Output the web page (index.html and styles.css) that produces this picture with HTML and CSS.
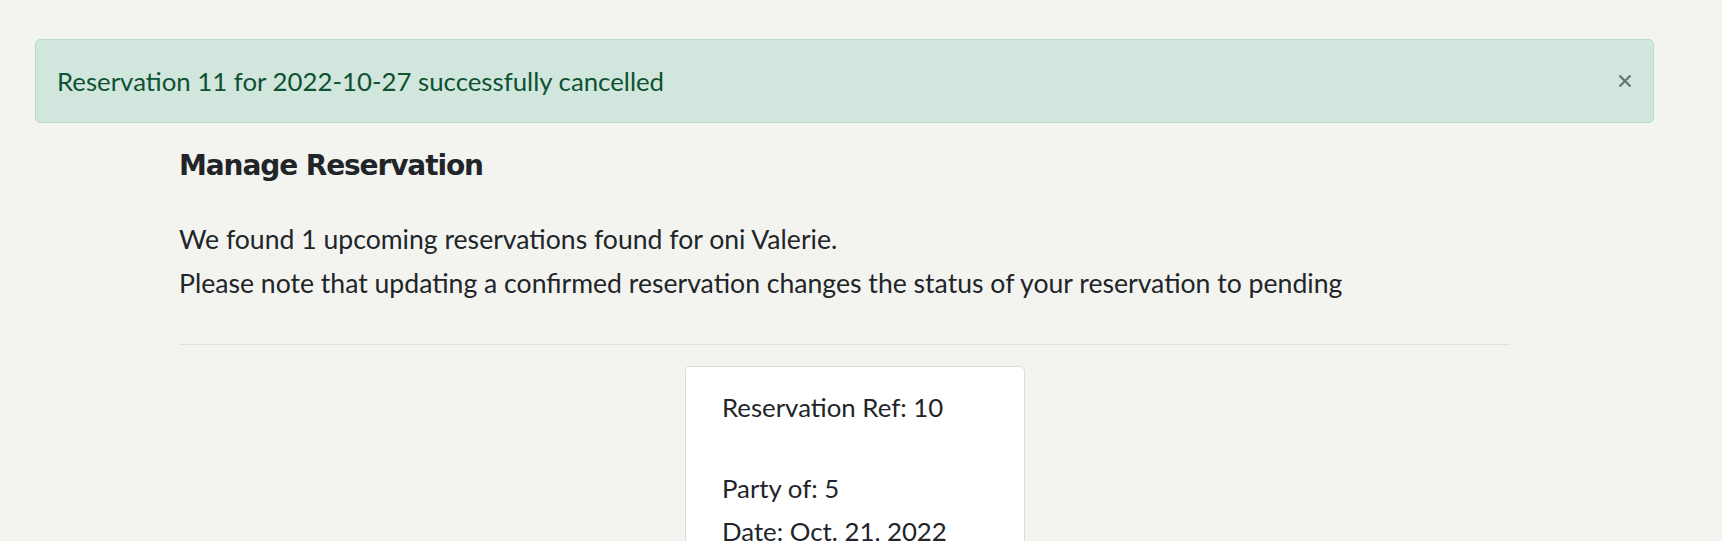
FILE: index.html
```html
<!DOCTYPE html>
<html lang="en">
<head>
<meta charset="utf-8">
<title>Manage Reservation</title>
<link rel="stylesheet" href="styles.css">
</head>
<body>
<div class="alert" role="alert">
  <span class="alert-text">Reservation 11 for 2022-10-27 successfully cancelled</span>
  <button class="btn-close" type="button" aria-label="Close">
    <svg width="14" height="14" viewBox="0 0 14 14" aria-hidden="true"><path d="M1.5 1.5 L12.5 12.5 M12.5 1.5 L1.5 12.5" stroke="currentColor" stroke-width="2.2" stroke-linecap="butt"/></svg>
  </button>
</div>
<main class="content">
  <h2 class="title">Manage Reservation</h2>
  <p class="intro">We found 1 upcoming reservations found for oni Valerie.<br>Please note that updating a confirmed reservation changes the status of your reservation to pending</p>
  <hr class="divider">
  <div class="card-row">
    <div class="card">
      <p class="card-ref">Reservation Ref: 10</p>
      <p class="card-line">Party of: 5</p>
      <p class="card-line">Date: Oct. 21, 2022</p>
    </div>
  </div>
</main>
</body>
</html>
```

FILE: styles.css
```css
html, body {
  margin: 0;
  padding: 0;
}
body {
  background: #f3f4ef;
  color: #212529;
  font-family: Lato, "Open Sans", sans-serif;
  font-size: 26.6px;
  line-height: 44px;
  overflow: hidden;
}
.alert {
  margin: 39px 68px 0 35px;
  padding: 20px 20px 20px 21px;
  background: #d1e7dd;
  border: 1px solid #badbcc;
  border-radius: 5px;
  color: #0f5132;
  display: flex;
  align-items: center;
  justify-content: space-between;
  font-size: 25.8px;
  line-height: 42px;
}
.btn-close {
  border: 0;
  background: transparent;
  padding: 0;
  margin-right: 1px;
  width: 14px;
  height: 14px;
  color: #000;
  opacity: 0.5;
  display: flex;
  cursor: pointer;
}
.content {
  margin: 26px 0 0 179px;
  width: 1331px;
}
.title {
  margin: 0;
  font-family: "DejaVu Sans", sans-serif;
  font-weight: 700;
  font-size: 28px;
  letter-spacing: -1.1px;
  line-height: 34px;
}
.intro {
  margin: 34px 0 0 0;
}
.divider {
  margin: 39px 0 0 0;
  border: 0;
  border-top: 1px solid #dfe0e6;
  height: 0;
}
.card-row {
  display: flex;
  padding-left: 506px;
  margin-top: 21px;
}
.card {
  width: 340px;
  box-sizing: border-box;
  background: #fff;
  border: 1px solid #dcdcd8;
  border-radius: 5px;
  padding: 19px 20px 20px 36px;
  font-size: 25.8px;
  line-height: 42px;
}
.card p {
  margin: 0;
}
.card .card-ref {
  margin-bottom: 39px;
}
.card .card-line:last-child {
  line-height: 44px;
}
```
